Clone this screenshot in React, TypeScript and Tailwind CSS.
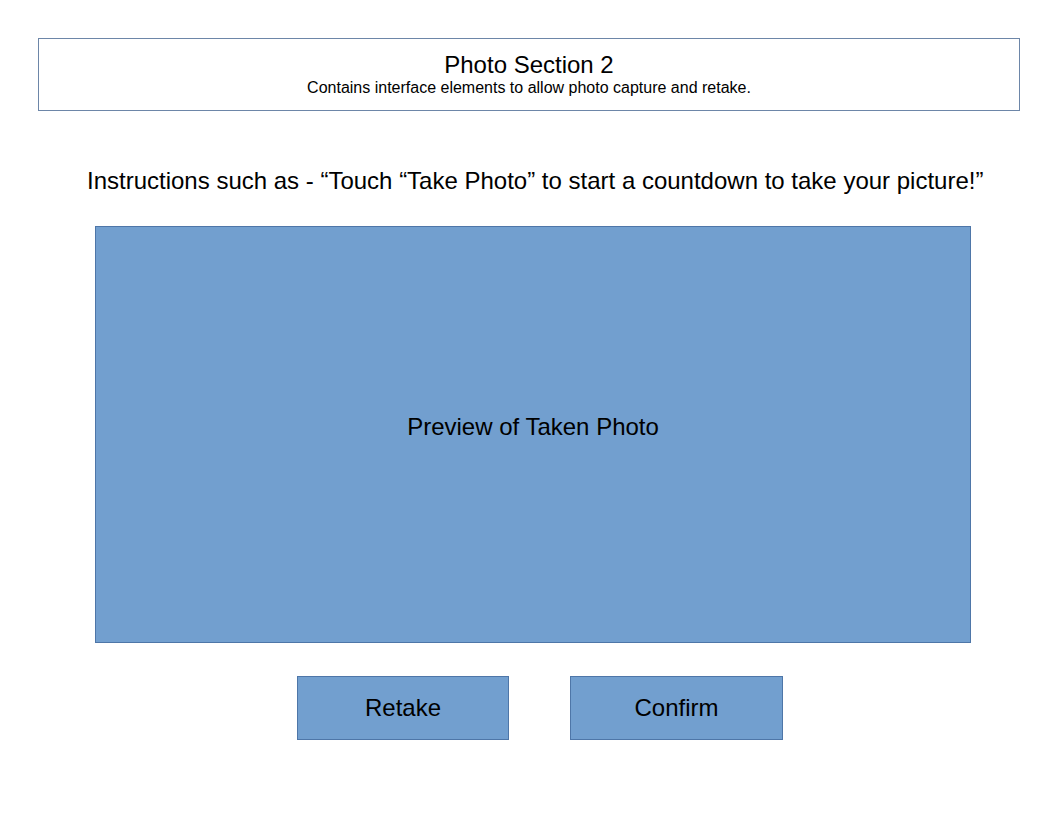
export default function App() {
  return (
    <main className="w-[1056px] h-[816px] bg-white font-['Liberation_Sans',Arial,sans-serif] text-black">
      <div className="pt-[38px] pl-[38px]">
        {/* Header */}
        <div className="w-[982px] h-[73px] border border-[#6d86a8] flex flex-col items-center pt-[12px]">
          <div className="text-[24px] leading-[28px]">Photo Section 2</div>
          <div className="text-[16px] leading-[18px]">Contains interface elements to allow photo capture and retake.</div>
        </div>
      </div>

      {/* Instructions */}
      <div className="mt-[56px] pl-[87px] w-[1000px] text-[24px] leading-[28px] whitespace-nowrap">
        Instructions such as - “Touch “Take Photo” to start a countdown to take your picture!”
      </div>

      {/* Photo preview */}
      <div className="mt-[31px] ml-[95px] w-[876px] h-[417px] bg-[#729fcf] border border-[#4e76a8] flex items-center justify-center pb-[15px]">
        <span className="text-[24px] leading-[28px]">Preview of Taken Photo</span>
      </div>

      {/* Buttons */}
      <div className="mt-[33px] flex pl-[297px] gap-[61px]">
        <button className="w-[212px] h-[64px] bg-[#729fcf] border border-[#4e76a8] text-[24px]">Retake</button>
        <button className="w-[213px] h-[64px] bg-[#729fcf] border border-[#4e76a8] text-[24px]">Confirm</button>
      </div>
    </main>
  )
}
